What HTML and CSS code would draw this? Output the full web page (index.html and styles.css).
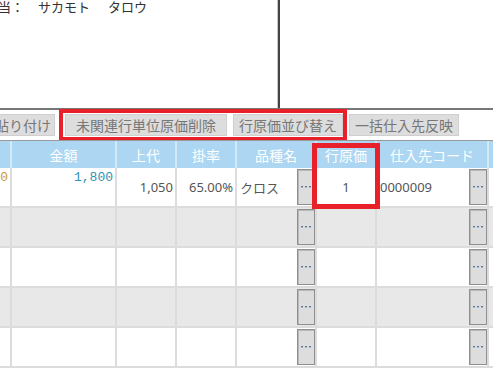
FILE: index.html
```html
<!DOCTYPE html>
<html lang="ja">
<head>
    <meta charset="UTF-8">
    <meta name="viewport" content="width=device-width, initial-scale=1.0">
    <title>行原価</title>
    <link rel="stylesheet" href="styles.css">
</head>
<body>
    <div class="top">
        <div class="staff">
            <span class="label">担当：</span>
            <span class="name">サカモト</span>
            <span class="name last">タロウ</span>
        </div>
        <div class="side"></div>
    </div>

    <div class="toolbar">
        <button class="btn btn-paste">貼り付け</button>
        <div class="mark">
            <button class="btn btn-wide">未関連行単位原価削除</button>
            <button class="btn">行原価並び替え</button>
        </div>
        <button class="btn btn-last">一括仕入先反映</button>
    </div>

    <div class="grid">
        <div class="row head">
            <div class="cell"></div>
            <div class="cell">金額</div>
            <div class="cell">上代</div>
            <div class="cell">掛率</div>
            <div class="cell">品種名</div>
            <div class="cell">行原価</div>
            <div class="cell">仕入先コード</div>
            <div class="cell"></div>
        </div>

        <div class="row">
            <div class="cell num top-al"><span class="amt gold">60</span></div>
            <div class="cell num top-al"><span class="amt">1,800</span></div>
            <div class="cell num">1,050</div>
            <div class="cell num">65.00%</div>
            <div class="cell text">クロス<span class="dots">…</span></div>
            <div class="cell center">1</div>
            <div class="cell text code">0000009<span class="dots">…</span></div>
            <div class="cell text">ロ</div>
        </div>

        <div class="row alt">
            <div class="cell"></div>
            <div class="cell"></div>
            <div class="cell"></div>
            <div class="cell"></div>
            <div class="cell text"><span class="dots">…</span></div>
            <div class="cell"></div>
            <div class="cell text"><span class="dots">…</span></div>
            <div class="cell"></div>
        </div>

        <div class="row">
            <div class="cell"></div>
            <div class="cell"></div>
            <div class="cell"></div>
            <div class="cell"></div>
            <div class="cell text"><span class="dots">…</span></div>
            <div class="cell"></div>
            <div class="cell text"><span class="dots">…</span></div>
            <div class="cell"></div>
        </div>

        <div class="row alt">
            <div class="cell"></div>
            <div class="cell"></div>
            <div class="cell"></div>
            <div class="cell"></div>
            <div class="cell text"><span class="dots">…</span></div>
            <div class="cell"></div>
            <div class="cell text"><span class="dots">…</span></div>
            <div class="cell"></div>
        </div>

        <div class="row">
            <div class="cell"></div>
            <div class="cell"></div>
            <div class="cell"></div>
            <div class="cell"></div>
            <div class="cell text"><span class="dots">…</span></div>
            <div class="cell"></div>
            <div class="cell text"><span class="dots">…</span></div>
            <div class="cell"></div>
        </div>

        <div class="col-mark"></div>
    </div>
</body>
</html>
```

FILE: styles.css
```css
body {
    margin: 0;
    background-color: #fff;
    overflow: hidden;
    font-family: "Noto Sans CJK JP", sans-serif;
    color: #333;
}

.top {
    display: flex;
    height: 108px;
    border-bottom: 2px solid #777;
}

.staff {
    width: 278px;
    font-size: 13px;
    line-height: 14px;
    white-space: nowrap;
    overflow: hidden;
}

.staff .label {
    margin-left: -15px;
}

.staff .name {
    margin-left: 11px;
}

.staff .name.last {
    margin-left: 15px;
}

.side {
    flex: 1;
    border-left: 2px solid #444;
    box-shadow: -1px 0 0 #c8c8c8;
}

.toolbar {
    display: flex;
    align-items: center;
    height: 30px;
}

.btn {
    height: 22px;
    padding: 0 5px;
    font-family: "Noto Sans CJK JP", sans-serif;
    font-size: 14px;
    line-height: 20px;
    color: #777;
    background-color: #dddddd;
    border: 1px solid #cfcfcf;
    border-radius: 0;
    white-space: nowrap;
}

.btn-paste {
    margin-left: -11px;
    padding: 0 3px 0 5px;
}

.btn-wide {
    padding: 0 10px;
}

.btn-last {
    margin-left: 6px;
}

.mark {
    position: relative;
    display: flex;
    gap: 6px;
    margin-left: 8px;
    padding-left: 2px;
}

.mark::after {
    content: "";
    position: absolute;
    top: -5px;
    bottom: -5px;
    left: -4px;
    right: -4px;
    border: 4px solid #e8202a;
}

.grid {
    position: relative;
    border-top: 1px solid #999;
}

.row {
    display: grid;
    grid-template-columns: 53px 105px 60px 60px 80px 60px 112px 80px;
    margin-left: -41px;
    height: 40px;
}

.row.alt {
    background-color: #e8e8e8;
}

.cell {
    box-sizing: border-box;
    display: flex;
    align-items: center;
    border-right: 2px solid #dcdcdc;
    border-bottom: 2px solid #dcdcdc;
    font-family: "Noto Sans", "Noto Sans CJK JP", sans-serif;
    font-size: 13px;
    color: #555;
    white-space: nowrap;
    overflow: hidden;
}

.head {
    height: 27px;
    background-color: #acd6f1;
}

.head .cell {
    justify-content: center;
    border-bottom: none;
    border-right-color: #d2e9f8;
    font-family: "Noto Sans CJK JP", sans-serif;
    font-size: 14px;
    color: #fff;
}

.num {
    justify-content: flex-end;
    padding-right: 2px;
}

.top-al {
    align-items: flex-start;
    padding-top: 3px;
}

.amt {
    font-family: "Liberation Mono", monospace;
    font-size: 13px;
    line-height: 13px;
    color: #2d93b8;
}

.amt.gold {
    color: #c9992c;
}

.center {
    justify-content: center;
}

.text {
    padding-left: 3px;
    font-family: "Noto Sans CJK JP", sans-serif;
}

.code {
    font-family: "Noto Sans", sans-serif;
}

.dots {
    box-sizing: border-box;
    width: 18px;
    height: 36px;
    margin-left: auto;
    background-color: #dddddd;
    border: 1px solid #8f8f8f;
    box-shadow: inset 1px 1px 0 #b8b8b8;
    font-family: "Noto Sans CJK JP", sans-serif;
    font-size: 12px;
    line-height: 34px;
    text-align: center;
    color: #444;
}

.col-mark {
    position: absolute;
    left: 312px;
    top: 2px;
    width: 68px;
    height: 66px;
    box-sizing: border-box;
    border: 5px solid #e8202a;
}
```
